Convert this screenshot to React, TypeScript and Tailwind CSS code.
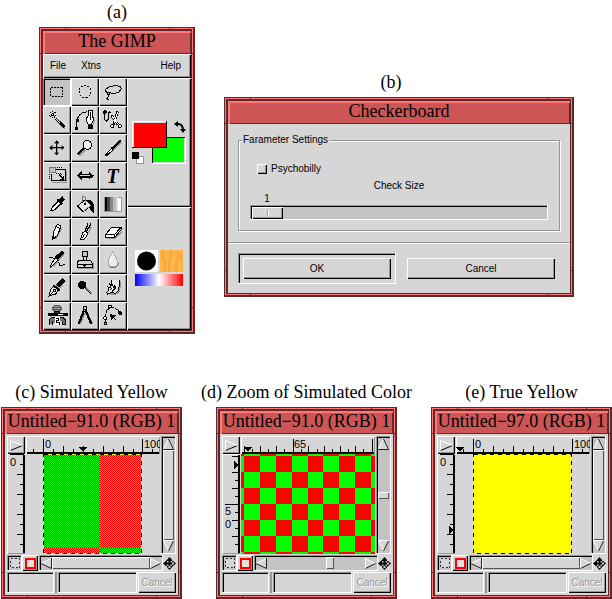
import type { ReactNode } from "react";

const sans = "font-['Liberation_Sans',Arial,sans-serif]";
const serif = "font-['Liberation_Serif','Times_New_Roman',serif]";

const raised =
  "bg-[#d6d6d6] shadow-[inset_1px_1px_0_#fff,inset_-1px_-1px_0_#000,inset_-2px_-2px_0_#969696]";
const raisedSoft = "bg-[#d6d6d6] shadow-[inset_1px_1px_0_#fff,inset_-1px_-1px_0_#555]";
const sunken =
  "shadow-[inset_-1px_-1px_0_#fff,inset_1px_1px_0_#969696,inset_2px_2px_0_#000]";

function Figure({ caption, children, className = "" }: { caption: string; children: ReactNode; className?: string }) {
  return (
    <figure className={`flex min-w-0 flex-col ${className}`}>
      <figcaption className={`mb-[3px] flex h-6 justify-center whitespace-nowrap text-[18px] leading-6 ${serif}`}>
        {caption}
      </figcaption>
      {children}
    </figure>
  );
}

function Notches() {
  const v = "absolute h-[3px] w-px bg-[#5f2929]";
  const h = "absolute h-px w-[3px] bg-[#5f2929]";
  return (
    <>
      <i className={`${v} left-[26px] top-0`} />
      <i className={`${v} right-[25px] top-0`} />
      <i className={`${v} bottom-0 left-[26px]`} />
      <i className={`${v} bottom-0 right-[25px]`} />
      <i className={`${h} left-0 top-[26px]`} />
      <i className={`${h} right-0 top-[26px]`} />
      <i className={`${h} bottom-[26px] left-0`} />
      <i className={`${h} bottom-[26px] right-0`} />
    </>
  );
}

function Window({ title, children }: { title: string; children: ReactNode }) {
  return (
    <section className="relative bg-[#cd5555] p-1 shadow-[inset_0_0_0_1px_#5f2929,inset_-2px_-2px_0_#5f2929,inset_2px_2px_0_#ff7777,inset_-3px_-3px_0_#ff7777,inset_0_0_0_4px_#5f2929]">
      <Notches />
      <h2
        className={`h-[23px] overflow-hidden whitespace-nowrap text-center text-[18px] leading-[20px] text-black shadow-[inset_2px_2px_0_#ff7777,inset_-1px_-1px_0_#5f2929] ${serif}`}
      >
        {title}
      </h2>
      <div className={`bg-[#d6d6d6] text-[10px] leading-3 text-black ${sans}`}>{children}</div>
    </section>
  );
}

/* ---------- toolbox ---------- */

const tools: { name: string; art: ReactNode }[] = [
  { name: "Rectangle select", art: <rect x="23" y="28" width="36" height="27" strokeDasharray="6 3" /> },
  { name: "Ellipse select", art: <circle cx="42" cy="41" r="18" strokeDasharray="6 4" /> },
  {
    name: "Free select",
    art: (
      <>
        <path d="M24 44C14 36 24 26 42 24C60 21 70 27 65 36C60 45 42 50 32 43" />
        <path d="M32 43l-8 2 3 6 6-3zM27 51v6l-3 5 5 5" />
      </>
    ),
  },
  {
    name: "Fuzzy select",
    art: (
      <>
        <path d="M42 46L66 68" stroke="#969696" strokeWidth="5" />
        <path d="M38 38L64 63" strokeWidth="8" />
        <path d="M40 40L50 50" stroke="#fff" strokeWidth="3" />
        <path d="M19 27h21M29 16v22M21 19l16 16M37 19l-16 16" strokeDasharray="3 3" />
      </>
    ),
  },
  {
    name: "Bezier path",
    art: (
      <>
        <path d="M16 67V54Q18 20 48 17" />
        <path d="M15 39h6v6h-6zM13 63h6v6h-6z" fill="#000" />
        <path d="M53 14h10v13l5 12-6 16H51l-6-16 8-12z" fill="#fff" />
        <path d="M57 18v24" />
        <path d="M51 57h14v11H51z" fill="#000" />
        <path d="M71 42l-5 16" stroke="#969696" />
      </>
    ),
  },
  {
    name: "Intelligent scissors",
    art: (
      <>
        <circle cx="17" cy="19" r="5" fill="#000" />
        <path d="M17 24v16l5 6 5-5V22l5-5 5 3" />
        <path d="M56 16L44 56M37 28l20 28" strokeWidth="7" />
        <path d="M56 17L45 52M39 30l17 23" stroke="#fff" />
        <circle cx="40" cy="61" r="5" fill="#fff" />
        <circle cx="62" cy="61" r="5" fill="#fff" />
      </>
    ),
  },
  {
    name: "Move",
    art: (
      <>
        <path d="M44 24v40M24 44h40" stroke="#969696" />
        <path d="M41 20v42M20 41h42" strokeWidth="4" />
        <path d="M34 27l7-8 7 8zM34 56l7 8 7-8zM27 34l-8 7 8 7zM56 34l8 7-8 7z" fill="#000" strokeWidth="1" />
      </>
    ),
  },
  {
    name: "Magnify",
    art: (
      <>
        <path d="M24 65L43 47" stroke="#969696" strokeWidth="6" />
        <path d="M20 61L38 43" strokeWidth="7" />
        <circle cx="49" cy="33" r="13" fill="#f2f2f2" />
        <path d="M42 31q2-7 9-7" stroke="#fff" />
      </>
    ),
  },
  {
    name: "Crop",
    art: (
      <>
        <path d="M68 24L38 54" stroke="#969696" strokeWidth="4" />
        <path d="M65 20L36 47" strokeWidth="7" />
        <path d="M38 42L20 63h5l17-15z" fill="#fff" />
      </>
    ),
  },
  {
    name: "Transform",
    art: (
      <>
        <path d="M27 60h43V26" stroke="#969696" />
        <path d="M19 17h17v15H19z" fill="#c0c0c0" stroke="#777" />
        <path d="M24 36v20h42V22H39" />
        <path d="M42 17h13v5M19 36v14h5M38 34h16v4" strokeDasharray="3 3" />
        <path d="M48 38l13 13m0-8v8h-9" />
      </>
    ),
  },
  {
    name: "Flip",
    art: (
      <>
        <path d="M22 47h44" stroke="#969696" />
        <path d="M19 41l11-10v6h24v-6l12 10-12 10v-6H30v6z" fill="#000" />
        <path d="M27 41h31" stroke="#d6d6d6" />
      </>
    ),
  },
  {
    name: "Text",
    art: (
      <text x="41" y="62" textAnchor="middle" fontSize="60" fontWeight="700" fontStyle="italic" fill="#000" stroke="none" className={serif}>
        T
      </text>
    ),
  },
  {
    name: "Color picker",
    art: (
      <>
        <path d="M27 66L58 36" stroke="#969696" strokeWidth="4" />
        <path d="M22 63l5-10 20-20 7 7-20 20z" fill="#fff" />
        <path d="M43 28l15 15" strokeWidth="6" />
        <path d="M50 34l12-11" strokeWidth="13" />
      </>
    ),
  },
  {
    name: "Bucket fill",
    art: (
      <>
        <path d="M50 32c12-2 19 4 17 34l-8-6-4-16z" fill="#000" />
        <path d="M20 48l24-20 17 19-24 18z" fill="#e8e8e8" />
        <path d="M38 62l22-16" stroke="#969696" />
        <path d="M33 36V24c0-7 10-7 10 0v16" stroke="#777" />
        <circle cx="43" cy="43" r="2" />
      </>
    ),
  },
  {
    name: "Blend",
    art: (
      <>
        <rect x="16" y="21" width="51" height="42" fill="#fff" stroke="#969696" />
        <path d="M18 21h6v42h-6z" fill="#000" stroke="none" />
        <path d="M24 21h8v42h-8z" fill="#444" stroke="none" />
        <path d="M32 21h9v42h-9z" fill="#888" stroke="none" />
        <path d="M41 21h9v42h-9z" fill="#bbb" stroke="none" />
        <path d="M50 21h8v42h-8z" fill="#ddd" stroke="none" />
      </>
    ),
  },
  {
    name: "Pencil",
    art: (
      <>
        <path d="M38 62L57 30" stroke="#969696" strokeWidth="4" />
        <path d="M30 62V48l10-26 5-3 8 4v6L42 54z" fill="#fff" />
        <path d="M40 26l12 6" />
        <path d="M29 57v7l7-5z" fill="#000" />
      </>
    ),
  },
  {
    name: "Paintbrush",
    art: (
      <>
        <path d="M38 66L62 26" stroke="#969696" strokeWidth="4" />
        <path d="M60 17L47 40M51 17L43 38" strokeWidth="4" />
        <path d="M28 65l7-20 7-6 8 5-4 12-9 9z" fill="#fff" />
        <path d="M41 47L34 61" />
      </>
    ),
  },
  {
    name: "Eraser",
    art: (
      <>
        <path d="M24 62h25l20-22" stroke="#969696" strokeWidth="4" />
        <path d="M19 50l19-22h28v8L47 58H19z" fill="#fff" />
        <path d="M19 50h27v8M46 50l20-22" />
      </>
    ),
  },
  {
    name: "Airbrush",
    art: (
      <>
        <path d="M65 21L30 62" stroke="#969696" strokeWidth="5" />
        <path d="M61 17L38 38" strokeWidth="11" />
        <path d="M38 34L22 60v4l23-21z" fill="#fff" />
        <path d="M18 34h10l6 5M46 48c7 6 0 13 9 12c6-1 7-8 12-4" />
      </>
    ),
  },
  {
    name: "Clone",
    art: (
      <>
        <path d="M22 68h45V48" stroke="#969696" />
        <circle cx="42" cy="24" r="9" fill="#c4c4c4" />
        <path d="M38 33l-2 11h12l-2-11M36 44H23l-4 6v14h44V50l-4-6H48" fill="#d6d6d6" />
        <path d="M19 54h44" />
        <path d="M34 54h14l-7 8z" fill="#000" />
      </>
    ),
  },
  {
    name: "Convolve",
    art: (
      <>
        <path d="M44 22c6 14 16 24 13 34c-6 12-22 10-27 4" stroke="#777" />
        <path d="M41 16C38 28 27 38 27 49c0 18 29 18 29 0C56 38 44 28 41 16z" fill="#ededed" stroke="#aaa" />
        <path d="M33 48q2-12 6-16" stroke="#fff" strokeWidth="5" />
      </>
    ),
  },
  {
    name: "Ink",
    art: (
      <>
        <path d="M68 21L46 46" stroke="#969696" strokeWidth="4" />
        <path d="M63 17L43 36" strokeWidth="13" />
        <path d="M32 37l14 11-8 12-20 6 5-20z" fill="#e8e8e8" />
        <path d="M18 66l15-16M31 46h5v5h-5z" />
        <path d="M31 33l19 16" strokeWidth="6" />
      </>
    ),
  },
  {
    name: "Dodge or burn",
    art: (
      <>
        <circle cx="34" cy="33" r="11" fill="#000" />
        <path d="M43 43L60 60" />
        <path d="M46 41L63 58" stroke="#969696" />
      </>
    ),
  },
  {
    name: "Smudge",
    art: (
      <>
        <path d="M34 60h14c10-3 14-10 14-20V22" stroke="#969696" strokeWidth="6" />
        <path d="M36 17l4 18-10-8 6 14-9-2 3 8-7 8 3 6 12-6 10 3c10-3 12-11 12-18V18" fill="#e8e8e8" />
        <path d="M42 38l6 6-9 9M32 47l6-3M46 34l5 8" />
      </>
    ),
  },
  {
    name: "Xinput airbrush",
    art: (
      <>
        <path d="M18 68V54l9-9h31l9 9v14h-8V56M27 68V56" fill="#777" />
        <ellipse cx="42" cy="19" rx="14" ry="9" fill="#999" stroke="#555" />
        <path d="M30 17h24M30 23h24" stroke="#555" />
        <path d="M17 36h56v4H17z" fill="#000" strokeWidth="4" />
        <path d="M34 27h16v6H34z" fill="#333" />
        <path d="M45 35h14v4H45z" fill="#fff" stroke="none" />
        <path d="M36 46h14v22H36z" fill="#fff" stroke="none" />
        <path d="M38 50h8v6h-6v6h8v6" />
      </>
    ),
  },
  {
    name: "Measure",
    art: (
      <>
        <path d="M46 27L66 66M44 29L28 66" stroke="#969696" strokeWidth="4" />
        <path d="M39 25L23 66M44 25L61 66" strokeWidth="7" />
        <circle cx="42" cy="18" r="5" fill="#d6d6d6" />
      </>
    ),
  },
  {
    name: "Path",
    art: (
      <>
        <path d="M19 46Q20 18 40 17Q56 20 63 33" strokeDasharray="9 3" />
        <path d="M29 10h7v7h-7z" fill="#fff" />
        <circle cx="64" cy="34" r="5" fill="#000" />
        <circle cx="19" cy="49" r="5" fill="#fff" />
        <path d="M15 61h7v7h-7z" fill="#fff" />
        <path d="M19 54v7" />
        <path d="M34 38l13 3-9 9z" fill="#000" />
        <path d="M42 45l10 10" strokeWidth="4" />
      </>
    ),
  },
];

function Toolbox() {
  return (
    <>
      <nav className={`flex h-6 items-center px-[7px] ${raised}`}>
        <button className="w-[31px] text-left">File</button>
        <button>Xtns</button>
        <button className="ml-auto pr-[3px]">Help</button>
      </nav>
      <div className="flex">
        <div className="grid grid-cols-3">
          {tools.map((t, i) => (
            <button key={t.name} aria-label={t.name} className={`size-7 ${i === 0 ? "bg-[#c5c2c5] " + sunken : raised}`}>
              <svg viewBox="0 0 84 84" className="size-7" fill="none" stroke="#000" strokeWidth="3" shapeRendering="crispEdges">
                {t.art}
              </svg>
            </button>
          ))}
        </div>
        <div className="flex flex-1 flex-col">
          <div className={`h-[129px] pl-[5px] pt-[43px] ${raised}`}>
            <div className="relative h-[43px] w-[54px]">
              <button
                aria-label="Background color"
                className="absolute bottom-0 right-0 h-[27px] w-[34px] bg-[#0f0] shadow-[inset_-1px_-1px_0_#fff,inset_1px_1px_0_#000,inset_-2px_-2px_0_#d6d6d6]"
              />
              <button
                aria-label="Foreground color"
                className="absolute left-0 top-0 h-[27px] w-[35px] bg-[#f00] shadow-[inset_-1px_-1px_0_#000,inset_1px_1px_0_#fff,inset_2px_2px_0_#d6d6d6]"
              />
              <svg viewBox="0 0 12 12" className="absolute right-0 top-0 size-3" aria-hidden="true">
                <path d="M3 3h2q4 1 4 6" fill="none" stroke="#000" strokeWidth="2" />
                <path d="M0 3l4-3v6zM6 8h6l-3 4z" />
              </svg>
              <svg viewBox="0 0 12 12" className="absolute bottom-0 left-0 size-3" shapeRendering="crispEdges" aria-hidden="true">
                <path d="M4 4h8v8H4z" fill="#969696" />
                <path d="M5 5h6v6H5z" fill="#fff" />
                <path d="M0 0h7v7H0z" />
              </svg>
            </div>
          </div>
          <div className={`flex-1 px-2 pt-[43px] ${raised}`}>
            <div className="flex justify-between">
              <svg viewBox="0 0 23 22" className="h-[22px] w-[23px] bg-white" role="img" aria-label="Brush">
                <circle cx="11.5" cy="11" r="9.5" />
              </svg>
              <svg viewBox="0 0 23 22" className="h-[22px] w-[23px] bg-[#ffb243]" role="img" aria-label="Pattern" fill="none">
                <path d="M3 0v9l2 5v8M11 0v5l-2 6v11M18 0v10l-2 5v7M21 3v8" stroke="#ef9f35" />
                <path d="M6 0v8M14 4l-1 14M20 13v9M1 12v8" stroke="#ffc266" />
              </svg>
            </div>
            <div className="mt-0.5 h-3 bg-[linear-gradient(90deg,#00f,#fff_50%,#f00)]" />
          </div>
        </div>
      </div>
    </>
  );
}

/* ---------- checkerboard dialog ---------- */

function CheckerboardDialog() {
  return (
    <form className="pt-[10px]" onSubmit={(e) => e.preventDefault()}>
      <fieldset className="mx-[10px] border border-[#969696] px-[11px] pb-[10px] shadow-[1px_1px_0_#fff,inset_1px_1px_0_#fff]">
        <legend className="-ml-2 bg-[#d6d6d6] px-px">Farameter Settings</legend>
        <div className="mt-[17px] flex items-center gap-1 pl-[7px]">
          <input
            id="psycho"
            type="checkbox"
            className="size-[10px] appearance-none bg-[#d6d6d6] shadow-[inset_1px_1px_0_#fff,inset_-1px_-1px_0_#000,inset_-2px_-2px_0_#969696]"
          />
          <label htmlFor="psycho">Psychobilly</label>
        </div>
        <label htmlFor="size" className="mt-[5px] block text-center">
          Check Size
        </label>
        <output htmlFor="size" className="mt-px block w-[34px] text-center">
          1
        </output>
        <input
          id="size"
          type="range"
          min={1}
          max={100}
          defaultValue={1}
          className="block h-[15px] w-full appearance-none bg-[#c5c2c5] px-0.5 shadow-[inset_-1px_-1px_0_#fff,inset_1px_1px_0_#969696,inset_2px_2px_0_#000] [&::-webkit-slider-thumb]:h-[12px] [&::-webkit-slider-thumb]:w-[31px] [&::-webkit-slider-thumb]:appearance-none [&::-webkit-slider-thumb]:bg-[linear-gradient(90deg,#969696_1px,#fff_1px)] [&::-webkit-slider-thumb]:bg-[length:2px_6px] [&::-webkit-slider-thumb]:bg-center [&::-webkit-slider-thumb]:bg-no-repeat [&::-webkit-slider-thumb]:bg-[#d6d6d6] [&::-webkit-slider-thumb]:shadow-[inset_1px_1px_0_#fff,inset_-1px_-1px_0_#000,inset_-2px_-2px_0_#969696]"
        />
      </fieldset>
      <hr className="mt-[11px] h-0.5 border-b border-t border-b-white border-t-[#969696]" />
      <div className="flex gap-[6px] px-[10px] pb-[9px] pt-[9px]">
        <div className={`flex flex-1 p-[5px] ${sunken}`}>
          <button className={`h-[21px] flex-1 ${raised}`}>OK</button>
        </div>
        <div className="flex flex-1 p-[5px]">
          <button className={`h-[21px] flex-1 ${raised}`}>Cancel</button>
        </div>
      </div>
    </form>
  );
}

/* ---------- image windows ---------- */

type Tick = [number, number];

const hTicks: Tick[] = [
  [7, 4], [17, 14], [27, 4], [37, 7], [47, 4], [57, 7], [67, 4], [77, 7], [87, 4], [97, 7], [107, 4], [116, 14], [126, 4],
];
const vTicks: Tick[] = [
  [1, 14], [11, 4], [21, 7], [31, 4], [41, 7], [51, 4], [61, 7], [71, 4], [81, 7], [91, 4],
];
const hTicksZoom: Tick[] = [
  [3, 7], [11, 4], [19, 7], [27, 4], [35, 7], [43, 4], [52, 14], [60, 4], [67, 7], [76, 4], [83, 7], [91, 4], [99, 7], [107, 4], [114, 7], [122, 4], [131, 14],
];
const vTicksZoom: Tick[] = [
  [3, 7], [11, 4], [19, 7], [27, 4], [35, 7], [43, 4], [51, 14], [59, 4], [67, 7], [75, 4], [83, 7], [91, 4],
];

function HRuler({ ticks, marks, pointer }: { ticks: Tick[]; marks: [number, string][]; pointer: number }) {
  return (
    <svg
      className={`h-[18px] w-full text-[11px] shadow-[inset_1px_1px_0_#fff,inset_-1px_0_0_#969696,inset_0_-2px_0_#000] ${sans}`}
      shapeRendering="crispEdges"
      role="img"
      aria-label="Horizontal ruler"
    >
      {ticks.map(([p, l]) => (
        <path key={p} d={`M${p} ${17 - l}h1v${l}h-1z`} />
      ))}
      {marks.map(([p, t]) => (
        <text key={p} x={p} y="12">
          {t}
        </text>
      ))}
      <path d={`M${pointer - 4} 11h8l-4 5z`} />
    </svg>
  );
}

function VRuler({ ticks, marks, pointer }: { ticks: Tick[]; marks: [number, string][]; pointer?: number }) {
  return (
    <svg
      className={`h-[100px] w-[18px] text-[11px] shadow-[inset_1px_1px_0_#fff,inset_0_-1px_0_#969696,inset_-2px_0_0_#000] ${sans}`}
      shapeRendering="crispEdges"
      role="img"
      aria-label="Vertical ruler"
    >
      {ticks.map(([p, l]) => (
        <path key={p} d={`M${17 - l} ${p - 1}h${l}v1h-${l}z`} />
      ))}
      {marks.map(([p, t]) => (
        <text key={p} x="3" y={p}>
          {t}
        </text>
      ))}
      {pointer !== undefined && <path d={`M12 ${pointer - 4}v8l5-4z`} />}
    </svg>
  );
}

function Arrow({ face, light, dark, className }: { face: string; light: string; dark: string; className: string }) {
  return (
    <svg className={`shrink-0 ${className}`} fill="none" aria-hidden="true">
      <path d={face} fill="#d6d6d6" />
      <path d={light} stroke="#fff" />
      <path d={dark} stroke="#222" />
    </svg>
  );
}

function VScroll({ thumb }: { thumb: string }) {
  return (
    <div className={`flex h-[118px] flex-col items-center bg-[#c5c2c5] py-0.5 ${sunken}`}>
      <Arrow className="h-[12px] w-[11px]" face="M5.5 0l5.500 11H0z" light="M5.5 1L.5 11" dark="M5.5 1l5 10.500H0" />
      <div className="flex w-[11px] flex-1 flex-col">
        <div className={`${thumb} ${raisedSoft}`} />
      </div>
      <Arrow className="h-[12px] w-[11px]" face="M0 0h11L5.500 11z" light="M5.5 11L.5 .5H11" dark="M10.500 1l-5 10" />
    </div>
  );
}

function HScroll({ thumb }: { thumb: string }) {
  return (
    <div className={`flex h-4 flex-1 items-center bg-[#c5c2c5] px-0.5 ${sunken}`}>
      <Arrow className="h-[11px] w-[11px]" face="M0 5.500L11 0v11z" light="M0 5.500L10.500 .5" dark="M0 5.500l10.500 5V0" />
      <div className="flex h-3 flex-1">
        <div className={`${thumb} ${raisedSoft}`} />
      </div>
      <Arrow className="h-[11px] w-[11px]" face="M0 0l11 5.500L0 11z" light="M.5 11V.5l10 5" dark="M.5 10.500l10-5" />
    </div>
  );
}

function ImageWindow(props: {
  title: string;
  h: { ticks: Tick[]; marks: [number, string][]; pointer: number };
  v: { ticks: Tick[]; marks: [number, string][]; pointer?: number };
  vThumb: string;
  hThumb: string;
  children: ReactNode;
}) {
  return (
    <Window title={props.title}>
      <div className="p-0.5">
        <div className="flex gap-px">
          <div className="grid min-w-0 flex-1 grid-cols-[18px_1fr] gap-x-px">
            <button aria-label="Menu" className={`flex h-[18px] items-center justify-center ${raised}`}>
              <svg className="h-[11px] w-[13px]" fill="none" aria-hidden="true">
                <path d="M.5 10.5l12-5" stroke="#000" />
                <path d="M.5 10.5V.5l12 5" stroke="#fff" />
              </svg>
            </button>
            <HRuler {...props.h} />
            <VRuler {...props.v} />
            <div className="h-[100px] overflow-hidden">{props.children}</div>
          </div>
          <div className="w-[15px]">
            <VScroll thumb={props.vThumb} />
          </div>
        </div>
        <div className="mt-px flex items-center">
          <button aria-label="Quick mask off" className={`flex h-4 w-[15px] items-center justify-center bg-[#c5c2c5] ${sunken}`}>
            <svg className="size-[10px]" fill="#d6d6d6" shapeRendering="crispEdges" aria-hidden="true">
              <rect x=".5" y=".5" width="9" height="9" stroke="#333" strokeDasharray="2 2" />
            </svg>
          </button>
          <button aria-label="Quick mask on" className={`mr-px flex h-4 w-4 items-center justify-center ${raised}`}>
            <span className="size-[11px] border-2 border-[#f00] bg-[#e8e0e0]" />
          </button>
          <HScroll thumb={props.hThumb} />
          <svg viewBox="0 0 13 13" className="size-[13px] shrink-0" role="img" aria-label="Navigate">
            <path d="M5.500 2h2v9h-2zM2 5.500h9v2H2zM6.500 0l3.500 4H3zM6.500 13l3.500-4H3zM0 6.500l4-3.500v7zM13 6.500l-4-3.500v7z" />
          </svg>
        </div>
        <div className="mt-px flex h-[21px]">
          <div className={`w-[47px] ${sunken}`} />
          <div className="mx-px w-[2px] bg-[#969696]" />
          <div className={`min-w-0 flex-1 ${sunken}`} />
          <button
            disabled
            className="ml-px w-[38px] bg-[#d6d6d6] text-[#969696] shadow-[inset_1px_1px_0_#fff,inset_-1px_-1px_0_#000,inset_-2px_-2px_0_#969696] [text-shadow:1px_1px_0_#fff]"
          >
            Cancel
          </button>
        </div>
      </div>
    </Window>
  );
}

function Marquee() {
  return (
    <>
      <rect x=".5" y=".5" width="98" height="99" fill="none" stroke="#ff0" />
      <rect x=".5" y=".5" width="98" height="99" fill="none" stroke="#000" strokeDasharray="4 4" />
    </>
  );
}

function DitheredImage() {
  return (
    <svg className="ml-[17px] block h-[100px] w-[99px]" shapeRendering="crispEdges" role="img" aria-label="Simulated yellow">
      <defs>
        <pattern id="even" width="2" height="2" patternUnits="userSpaceOnUse">
          <path d="M0 0h2v2H0z" fill="#0f0" />
          <path d="M0 0h1v1H0zM1 1h1v1H1z" fill="#f00" />
        </pattern>
        <pattern id="odd" width="2" height="2" patternUnits="userSpaceOnUse">
          <path d="M0 0h2v2H0z" fill="#f00" />
          <path d="M0 0h1v1H0zM1 1h1v1H1z" fill="#0f0" />
        </pattern>
      </defs>
      <rect width="57" height="94" fill="url(#even)" />
      <rect x="57" width="42" height="94" fill="url(#odd)" />
      <rect y="94" width="57" height="6" fill="url(#odd)" />
      <rect x="57" y="94" width="42" height="6" fill="url(#even)" />
      <Marquee />
    </svg>
  );
}

const colEdges = [0, 3, 19, 35, 51, 67, 82, 98, 114, 130, 134];
const rowEdges = [0, 2, 18, 34, 50, 66, 82, 98, 100];

function ZoomedImage() {
  return (
    <svg
      viewBox="0 0 134 100"
      preserveAspectRatio="xMinYMin slice"
      className="block h-[100px] w-full"
      shapeRendering="crispEdges"
      role="img"
      aria-label="Zoomed checkerboard"
    >
      <path d="M0 0h134v100H0z" fill="#0f0" />
      {rowEdges.slice(0, -1).map((y, j) =>
        colEdges.slice(0, -1).map((x, i) =>
          (i + j) % 2 === 0 ? (
            <rect key={`${i}-${j}`} x={x} y={y} width={colEdges[i + 1] - x} height={rowEdges[j + 1] - y} fill="#f00" />
          ) : null,
        ),
      )}
    </svg>
  );
}

function YellowImage() {
  return (
    <svg className="ml-[17px] block h-[100px] w-[99px] bg-[#ff0]" shapeRendering="crispEdges" role="img" aria-label="Solid yellow">
      <Marquee />
    </svg>
  );
}

export default function App() {
  return (
    <main className="bg-white text-black">
      <div className="flex items-start gap-[29px] pl-[39px] pr-[38px]">
        <Figure caption="(a)" className="w-[156px]">
          <Window title="The GIMP">
            <Toolbox />
          </Window>
        </Figure>
        <div className="flex-1 pt-[70px]">
          <Figure caption="(b)" className="[&>figcaption]:pr-4">
            <Window title="Checkerboard">
              <CheckerboardDialog />
            </Window>
          </Figure>
        </div>
      </div>
      <div className="mt-[46px] grid grid-cols-3 gap-[34px] pl-px">
        <Figure caption="(c) Simulated Yellow">
          <ImageWindow
            title="Untitled−91.0 (RGB) 1"
            h={{ ticks: hTicks, marks: [[19, "0"], [118, "100"]], pointer: 57 }}
            v={{ ticks: vTicks, marks: [[12, "0"]] }}
            vThumb="flex-1"
            hThumb="flex-1"
          >
            <DitheredImage />
          </ImageWindow>
        </Figure>
        <Figure caption="(d) Zoom of Simulated Color">
          <ImageWindow
            title="Untitled−91.0 (RGB) 1"
            h={{ ticks: hTicksZoom, marks: [[53, "65"]], pointer: 7 }}
            v={{ ticks: vTicksZoom, marks: [[61, "5"], [74, "0"]], pointer: 11 }}
            vThumb="mt-[42px] h-[7px]"
            hThumb="ml-auto mr-[31px] w-2"
          >
            <ZoomedImage />
          </ImageWindow>
        </Figure>
        <Figure caption="(e) True Yellow">
          <ImageWindow
            title="Untitled−97.0 (RGB) 1"
            h={{ ticks: hTicks, marks: [[19, "0"], [118, "100"]], pointer: 4 }}
            v={{ ticks: vTicks, marks: [[12, "0"]], pointer: 76 }}
            vThumb="flex-1"
            hThumb="flex-1"
          >
            <YellowImage />
          </ImageWindow>
        </Figure>
      </div>
    </main>
  );
}
